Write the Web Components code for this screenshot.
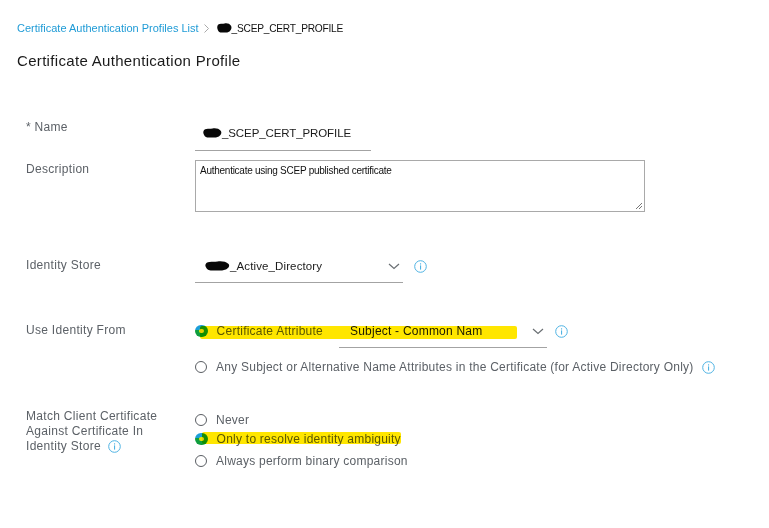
<!DOCTYPE html>
<html><head><meta charset="utf-8">
<style>
html,body{margin:0;background:#fff}
body{font-family:"Liberation Sans",Arial,sans-serif;width:769px;height:528px;overflow:hidden}
</style></head><body>
<cert-page></cert-page>
<script>
const def=(name,html)=>{customElements.define(name,class extends HTMLElement{constructor(){super();this.attachShadow({mode:'open'}).innerHTML=html(this)}})};
const blob=(w)=>`<svg width="${w}" height="10" viewBox="0 0 18 10" preserveAspectRatio="none" style="display:inline-block;vertical-align:-1px"><path d="M1 2C3 0 6 1 9 .5c3-.5 6 0 8 2.500 1 2 0 4-2 5.500-3 1.500-6 1-9 1S2 9 1 7C0 5 0 3.500 1 2z" fill="#080808"/></svg>`;
def('x-blob',h=>blob(h.getAttribute('w')||16));
def('x-info',h=>`<style>:host{display:inline-flex}</style><svg width="13" height="13" viewBox="0 0 13 13"><circle cx="6.500" cy="6.500" r="5.800" fill="none" stroke="#4fb3e3" stroke-width="1"/><rect x="6" y="5.400" width="1.100" height="4.200" fill="#4fb3e3"/><rect x="6" y="3.300" width="1.100" height="1.200" fill="#4fb3e3"/></svg>`);
def('x-chevron',h=>`<style>:host{display:inline-flex}</style><svg width="12" height="7" viewBox="0 0 12 7"><path d="M1 1l5 4.500L11 1" fill="none" stroke="#6a6f73" stroke-width="1.200"/></svg>`);
def('x-radio',h=>{const on=h.hasAttribute('checked');return `<style>
:host{display:flex;align-items:center;gap:9px;height:14px;font-size:12px;letter-spacing:.24px;color:#5c6167;position:relative}
.r{flex:none;width:10px;height:10px;border:1.300px solid #5a5e63;border-radius:50%;box-sizing:content-box}
.on{width:12.600px;height:12.600px;border:0;background:conic-gradient(from 120deg,#0f9d3e 0 45%,#1b9ed8 45% 100%);display:flex;align-items:center;justify-content:center}
.on i{width:4.500px;height:4.500px;border-radius:50%;background:#e8e800}
</style>${on?'<span class="r on"><i></i></span>':'<span class="r"></span>'}<span><slot></slot></span>`});
def('x-select',h=>`<style>
:host{display:flex;align-items:center;box-sizing:border-box;height:24px;border-bottom:1px solid #a3a3a3;font-size:11.500px;letter-spacing:.12px;color:#1b1b1b;padding:0 3px 9px 10px;position:relative}
.v{flex:1;white-space:nowrap;overflow:hidden}
</style><span class="v"><slot></slot></span><x-chevron></x-chevron>`);
def('x-row',h=>`<style>
:host{display:grid;grid-template-columns:169px 1fr;font-size:12px;letter-spacing:.3px;color:#5c6167}
.l{line-height:15px}
</style><div class="l"><slot name="label"></slot></div><div><slot></slot></div>`);
def('x-mark',h=>`<style>:host{position:absolute;display:block;background:#ffe600;mix-blend-mode:multiply;border-radius:2px}</style>`);
def('cert-page',h=>`<style>
:host{display:block;position:relative;width:769px;height:528px;padding:21px 0 0 17px;box-sizing:border-box}
.crumb{display:flex;align-items:center;height:14px;font-size:11px;color:#1f9bd6;white-space:nowrap}
.crumb svg{margin:0 8px 0 5px}
.crumb b{font-weight:400;color:#111;font-size:10.200px;letter-spacing:-.25px}
h1{margin:17px 0 0;font-size:15px;line-height:18px;font-weight:400;color:#1a1a1a;letter-spacing:.32px;white-space:nowrap}
.form{margin:47px 0 0 9px}
.name{box-sizing:border-box;width:176px;height:32px;border-bottom:1px solid #a3a3a3;margin-top:2px;padding:6px 0 0 8px;font-size:11.500px;letter-spacing:-.1px;color:#1b1b1b;white-space:nowrap;line-height:16px}
.area{box-sizing:border-box;width:450px;height:52px;border:1px solid #a9a9a9;padding:3px 4px;font-size:10px;color:#111;position:relative;line-height:13px;letter-spacing:-.26px}
.grip{position:absolute;right:1px;bottom:1px}
.sel{display:flex;align-items:flex-start}
.sel x-info{margin:6px 0 0 11px}
.ca{display:flex;align-items:flex-start;height:45px}
.ca x-radio{width:144px;margin-top:5px;white-space:nowrap}
.ca x-select{width:208px;padding-left:11px;font-size:12px;letter-spacing:.22px}
.ca .cs{display:flex;align-items:flex-start;margin-top:5px}
.ca x-info{margin:1px 0 0 8px}
.radios{display:flex;flex-direction:column}
</style>
<div class="crumb"><span>Certificate Authentication Profiles List</span><svg width="5" height="9" viewBox="0 0 5 9"><path d="M.5.5l4 4-4 4" fill="none" stroke="#a9a9a9"/></svg><b><x-blob w="15"></x-blob>_SCEP_CERT_PROFILE</b></div>
<h1>Certificate Authentication Profile</h1>
<div class="form">
 <x-row style="height:33px"><span slot="label" style="position:relative;top:3px">* Name</span><div class="name"><x-blob w="19"></x-blob>_SCEP_CERT_PROFILE</div></x-row>
 <x-row style="margin-top:10px;height:52px"><span slot="label" style="position:relative;top:2px">Description</span><div class="area">Authenticate using SCEP published certificate<svg class="grip" width="9" height="9" viewBox="0 0 9 9"><path d="M8 2L2 8M8 5L5 8" stroke="#777" stroke-width="1"/></svg></div></x-row>
 <x-row style="margin-top:42px;height:29px"><span slot="label" style="position:relative;top:4px">Identity Store</span><div class="sel"><x-select style="width:208px;margin-top:5px"><x-blob w="25"></x-blob>_Active_Directory</x-select><x-info></x-info></div></x-row>
 <x-row style="margin-top:36px;height:71px"><span slot="label" style="position:relative;top:4px">Use Identity From</span><div>
   <div class="ca"><x-radio checked>Certificate Attribute</x-radio><div class="cs"><x-select>Subject - Common Nam</x-select><x-info></x-info></div></div>
   <x-radio style="white-space:nowrap;margin-top:-3px;height:12px">Any Subject or Alternative Name Attributes in the Certificate (for Active Directory Only)<x-info style="margin-left:8px;vertical-align:-3px"></x-info></x-radio>
 </div></x-row>
 <x-row style="margin-top:19px"><span slot="label"><div style="width:140px">Match Client Certificate Against Certificate In Identity Store<x-info style="margin-left:7px;vertical-align:-3px"></x-info></div></span><div class="radios" style="padding-top:4px">
   <x-radio>Never</x-radio><x-radio checked style="margin-top:5px">Only to resolve identity ambiguity</x-radio><x-radio style="margin-top:8px">Always perform binary comparison</x-radio>
 </div></x-row>
</div>
<x-mark style="left:200px;top:326px;width:317px;height:13px"></x-mark>
<x-mark style="left:202px;top:432px;width:199px;height:12px"></x-mark>
`);
</script>
</body></html>
